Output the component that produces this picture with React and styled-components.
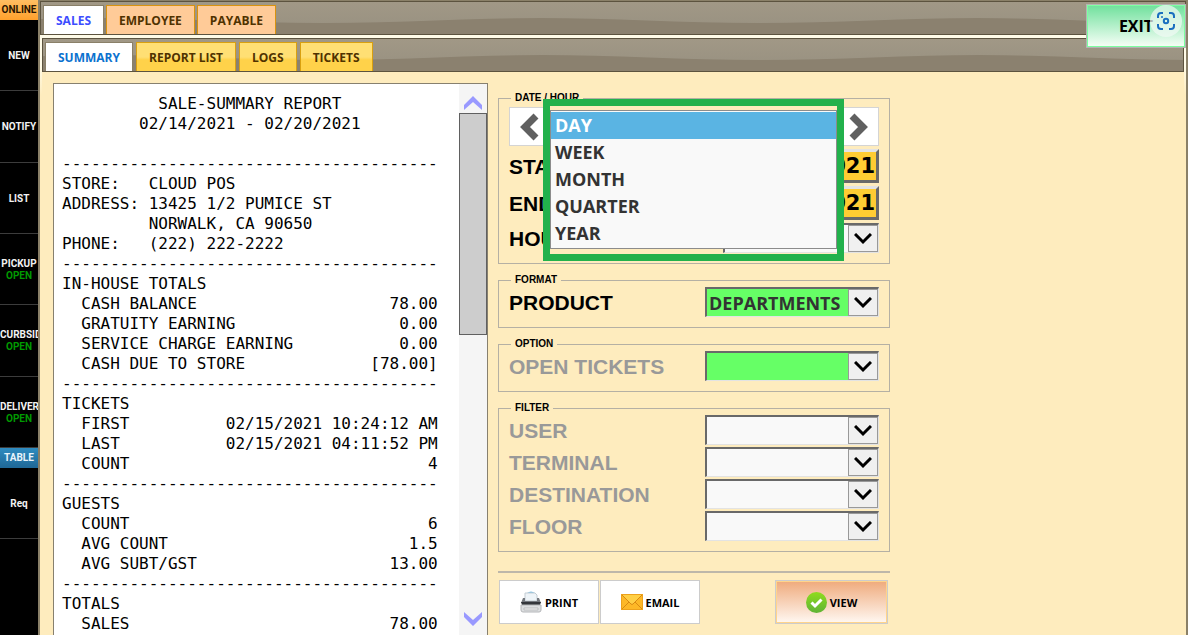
import React, { useState } from 'react'
import styled, { createGlobalStyle } from 'styled-components'

const GlobalStyle = createGlobalStyle`
  * {
    box-sizing: border-box;
  }

  body {
    margin: 0;
    background: #feecbe;
    font-family: 'Open Sans', 'Noto Sans', sans-serif;
  }

  button, select {
    font-family: inherit;
    margin: 0;
  }
`

const Screen = styled.div`
  display: flex;
  height: 100vh;
  overflow: hidden;
`

const Sidebar = styled.nav`
  flex: 0 0 38px;
  min-width: 0;
  width: 38px;
  overflow: hidden;
  background: #000;
  display: flex;
  flex-direction: column;
`

const SideFlag = styled.div`
  flex: none;
  text-align: center;
  white-space: nowrap;
  overflow: hidden;
  font: bold 10px/20px Roboto, sans-serif;
  color: ${({ $blue }) => ($blue ? '#e8f4fc' : '#2a1600')};
  background: ${({ $blue }) =>
    $blue
      ? 'linear-gradient(#2f8cc0, #1f6796)'
      : 'linear-gradient(#ffbe62, #ffa02c)'};
`

const SideGroup = styled.div`
  flex: none;
  height: 428px;
  display: flex;
  flex-direction: column;
`

const SideButton = styled.button`
  flex: ${({ $single }) => ($single ? '0 0 71px' : '1')};
  width: 100%;
  padding: 2px 0 0;
  border: 0;
  border-bottom: 1px solid #3c3c3c;
  background: #000;
  color: #f2f2f2;
  font: bold 10px/12px Roboto, sans-serif;
  text-align: center;
  white-space: nowrap;
  overflow: hidden;
`

const Status = styled.span`
  color: #009a00;
`

const SideName = styled.span`
  display: block;
`

const Main = styled.main`
  flex: 1;
  min-width: 0;
  display: flex;
  flex-direction: column;
  padding-top: 1px;
  border-left: 2px solid #8a8068;
  border-right: 2px solid #8a8068;
  background: #8a8068;
  position: relative;
`

const WAVE = encodeURIComponent(
  "<svg xmlns='http://www.w3.org/2000/svg' width='436' height='34'><path d='M0 21 C75 21 150 16 218 16 S361 21 436 21 V34 H0 Z' fill='#8b816f'/></svg>"
)

const TabBar = styled.div`
  height: 34px;
  flex: none;
  display: flex;
  align-items: flex-end;
  gap: ${({ $tight }) => ($tight ? 2 : 3)}px;
  padding: 0 2px;
  border: 1px solid #5c533f;
  background: url("data:image/svg+xml,${WAVE}") 282px 0 repeat-x,
    linear-gradient(#a19886, #979080);
`

const SubPanel = styled.div`
  flex: 1;
  min-height: 0;
  display: flex;
  flex-direction: column;
  padding: 3px 2px 0;
  background: linear-gradient(#fffbe8 30px, #feecbe 60px);
`

const Tab = styled.button`
  height: 29px;
  padding: 0 12px;
  border: 1px solid ${({ $edge }) => $edge};
  border-bottom: 0;
  background: ${({ $fill }) => $fill};
  color: ${({ $ink }) => $ink};
  font-size: 12px;
  font-weight: bold;
  white-space: nowrap;
`

const ExitButton = styled.button`
  position: absolute;
  top: 4px;
  right: 0;
  width: 100px;
  height: 44px;
  padding: 0;
  border: 1px solid #b5b5b5;
  box-shadow: inset 0 0 0 1px #7dffa0;
  background: linear-gradient(#6fe09c, #f8fff8);
  font-size: 16px;
  font-weight: bold;
`

const LensBadge = styled.span`
  position: absolute;
  top: 0;
  right: 3px;
  width: 32px;
  height: 32px;
  border-radius: 50%;
  display: flex;
  align-items: center;
  justify-content: center;
  background: rgba(240, 250, 244, 0.72);
`

const Body = styled.div`
  flex: 1;
  min-height: 0;
  display: flex;
  gap: 10px;
  padding: 11px 11px 0;
  background: #feecbe;
`

const Report = styled.section`
  flex: 0 1 435px;
  display: flex;
  border: 1px solid #87806f;
  border-bottom: 0;
  background: #fff;
`

const ReportText = styled.pre`
  flex: 1;
  margin: 0;
  padding: 10px 8px;
  overflow: hidden;
  font: 16px/20px 'DejaVu Sans Mono', monospace;
  color: #000;
`

const ScrollTrack = styled.div`
  flex: 0 0 28px;
  display: flex;
  flex-direction: column;
  background: #f5f5f5;
`

const ScrollButton = styled.button`
  height: 29px;
  padding: ${({ $down }) => ($down ? '0 0 4px' : '8px 0 0')};
  border: 0;
  background: none;
  display: flex;
  align-items: center;
  justify-content: center;
`

const ScrollThumb = styled.div`
  height: 222px;
  margin-bottom: auto;
  border: 1px solid #606060;
  background: #cdcdcd;
`

const Form = styled.form`
  flex: 0 1 392px;
  display: flex;
  flex-direction: column;
  gap: 10px;
  padding-top: 9px;
`

const Group = styled.fieldset`
  margin: 0;
  min-width: 0;
  padding: ${({ $roomy }) => ($roomy ? 3 : 1)}px 10px 10px;
  border: 1px solid #b5b0a4;
  display: flex;
  flex-direction: column;
  gap: ${({ $roomy }) => ($roomy ? 3 : 2)}px;
  position: relative;
`

const Legend = styled.legend`
  margin-left: 2px;
  padding: 0 4px;
  font: bold 10px/12px 'Liberation Sans', sans-serif;
  color: #000;
`

const Row = styled.div`
  display: flex;
  align-items: center;
  justify-content: space-between;
`

const FieldLabel = styled.label`
  padding-top: 2px;
  font: bold 21px/28px 'Liberation Sans', sans-serif;
  color: ${({ $dim }) => ($dim ? '#999' : '#000')};
`

const StepButton = styled.button`
  width: 40px;
  height: 39px;
  padding: 0;
  border: 1px solid #d4d4d4;
  background: #fff;
  display: flex;
  align-items: center;
  justify-content: center;
`

const DateButton = styled.button`
  height: 34px;
  padding: 0 1px;
  border: 3px solid;
  border-color: #e3e3e3 #696969 #696969 #e3e3e3;
  background: #ffcc33;
  font: bold 21px/28px 'DejaVu Sans', sans-serif;
`

const SelectBox = styled.div`
  position: relative;
  width: ${({ $narrow }) => ($narrow ? 156 : 174)}px;
  height: 30px;

  select {
    appearance: none;
    width: 100%;
    height: 100%;
    padding: 0 30px 0 2px;
    border: 2px solid;
    border-color: #696969 #e3e3e3 #e3e3e3 #696969;
    border-right-width: 1px;
    border-bottom-width: 1px;
    border-radius: 0;
    background: ${({ $green }) => ($green ? '#66ff66' : '#f9f9f9')};
    color: #333;
    font-size: 18px;
    font-weight: bold;
  }
`

const SelectArrow = styled.span`
  position: absolute;
  top: 2px;
  right: 1px;
  bottom: 1px;
  width: 30px;
  border: 1px solid #999;
  background: #f0f0f0;
  display: flex;
  align-items: center;
  justify-content: center;
  pointer-events: none;
`

const Popup = styled.div`
  position: absolute;
  z-index: 2;
  top: -5px;
  left: 44px;
  right: 45px;
  height: 162px;
  border: 7px solid #22b14c;
  padding: 4px 0 0;
`

const PopupList = styled.ul`
  list-style: none;
  margin: 0;
  padding: 1px 0;
  border: 1px solid #8c8c8c;
  background: #f9f9f9;
`

const PopupItem = styled.li`
  padding-left: 4px;
  font-size: 18px;
  font-weight: bold;
  line-height: 27px;
  color: ${({ $active }) => ($active ? '#fff' : '#333')};
  background: ${({ $active }) => ($active ? '#5ab4e3' : 'transparent')};
`

const Actions = styled.div`
  display: flex;
  gap: 1px;
  margin-top: 9px;
  padding: 7px 2px 0 1px;
  border-top: 2px solid #bdb7aa;
`

const ActionButton = styled.button`
  flex: 0 0 ${({ $primary }) => ($primary ? 113 : 100)}px;
  height: 44px;
  margin-left: ${({ $primary }) => ($primary ? 'auto' : 0)};
  padding: 0;
  border: 1px solid #ccc;
  box-shadow: ${({ $primary }) => ($primary ? 'inset 0 0 0 1px #ffd48a' : 'none')};
  background: ${({ $primary }) =>
    $primary ? 'linear-gradient(#efaa7c, #fff8f2)' : '#fff'};
  display: flex;
  align-items: center;
  justify-content: center;
  gap: 3px;
  font-size: 11px;
  font-weight: bold;
  color: #000;
`

const WIDTH = 39
const RULE = '-'.repeat(WIDTH)

const center = (text) => ' '.repeat((WIDTH - text.length) / 2) + text
const line = (label, value) =>
  '  ' + label + value.padStart(WIDTH - 2 - label.length)

const REPORT = [
  center('SALE-SUMMARY REPORT'),
  center('02/14/2021 - 02/20/2021'),
  '',
  RULE,
  'STORE:   CLOUD POS',
  'ADDRESS: 13425 1/2 PUMICE ST',
  '         NORWALK, CA 90650',
  'PHONE:   (222) 222-2222',
  RULE,
  'IN-HOUSE TOTALS',
  line('CASH BALANCE', '78.00'),
  line('GRATUITY EARNING', '0.00'),
  line('SERVICE CHARGE EARNING', '0.00'),
  line('CASH DUE TO STORE', '[78.00]'),
  RULE,
  'TICKETS',
  line('FIRST', '02/15/2021 10:24:12 AM'),
  line('LAST', '02/15/2021 04:11:52 PM'),
  line('COUNT', '4'),
  RULE,
  'GUESTS',
  line('COUNT', '6'),
  line('AVG COUNT', '1.5'),
  line('AVG SUBT/GST', '13.00'),
  RULE,
  'TOTALS',
  line('SALES', '78.00'),
].join('\n')

const SIDE_ITEMS = [
  { name: 'NEW' },
  { name: 'NOTIFY' },
  { name: 'LIST' },
  { name: 'PICKUP', status: 'OPEN' },
  { name: 'CURBSIDE', status: 'OPEN' },
  { name: 'DELIVERY', status: 'OPEN' },
]

const PERIODS = ['DAY', 'WEEK', 'MONTH', 'QUARTER', 'YEAR']

const FILTERS = ['USER', 'TERMINAL', 'DESTINATION', 'FLOOR']

const Chevron = ({ dir }) => (
  <svg width='24' height='30' viewBox='0 0 24 30'>
    <path
      d={dir === 'left' ? 'M19 4 L8 15 L19 26' : 'M5 4 L16 15 L5 26'}
      fill='none'
      stroke='#606060'
      strokeWidth='7'
    />
  </svg>
)

const ScrollArrow = ({ down }) => (
  <svg width='18' height='14' viewBox='0 0 18 14'>
    <path
      d={down ? 'M0 0 L9 8 L18 0 V5 L9 14 L0 5 Z' : 'M0 14 L9 6 L18 14 V9 L9 0 L0 9 Z'}
      fill='#9999ff'
    />
  </svg>
)

const PrinterIcon = () => (
  <svg width='22' height='22' viewBox='0 0 22 22'>
    <path d='M7 2 Q11 -1 15 2 V4 H7 Z' fill='#7fbfe4' />
    <path d='M5 2 H15 L17 4 V10 H5 Z' fill='#eef4f8' stroke='#c3ccd3' />
    <path d='M3 7 H5 V10 H17 V7 H19 L21 12 H1 Z' fill='#74787e' />
    <path d='M1 11 H21 L20 14 H2 Z' fill='#33363b' />
    <path d='M1 14 H21 V19 Q21 21 19 21 H3 Q1 21 1 19 Z' fill='#dddfe1' stroke='#b4b6b9' />
    <path d='M4 17 H18 V19 H4 Z' fill='#f5f5f5' stroke='#bbbdbf' />
  </svg>
)

const MailIcon = () => (
  <svg width='22' height='16' viewBox='0 0 22 16'>
    <rect x='0.5' y='0.5' width='21' height='15' fill='#fdb827' stroke='#eda21c' />
    <path d='M1 1 H21 L12 10 Q11 11 10 10 Z' fill='#ffcf45' />
    <path d='M1 1 L10 10 Q11 11 12 10 L21 1 M1 15 L8 8 M21 15 L14 8' fill='none' stroke='#d98a12' />
  </svg>
)

const CheckIcon = () => (
  <svg width='21' height='21' viewBox='0 0 21 21'>
    <defs>
      <linearGradient id='check' x1='0' y1='0' x2='0' y2='1'>
        <stop offset='0' stopColor='#8fdc1e' />
        <stop offset='1' stopColor='#5fb336' />
      </linearGradient>
    </defs>
    <circle cx='10.5' cy='10.5' r='10.5' fill='url(#check)' />
    <path d='M5.5 10.5 L9 14 L15.5 7.5' fill='none' stroke='#fff' strokeWidth='3' />
  </svg>
)

const LensIcon = () => (
  <svg width='18' height='18' viewBox='0 0 18 18' fill='none' stroke='#1a6fc0' strokeWidth='2'>
    <path d='M1 6 V4 Q1 1 4 1 H6 M12 1 H14 Q17 1 17 4 V6 M17 12 V14 Q17 17 14 17 H12 M6 17 H4 Q1 17 1 14 V12' />
    <circle cx='9' cy='9' r='2.2' />
    <circle cx='5' cy='5' r='1' fill='#1a6fc0' stroke='none' />
  </svg>
)

const Select = ({ id, value, green, narrow }) => (
  <SelectBox $green={green} $narrow={narrow}>
    <select id={id} defaultValue={value}>
      <option value={value}>{value}</option>
    </select>
    <SelectArrow>
      <svg width='18' height='12' viewBox='0 0 18 12'>
        <path d='M1 1 L9 9 L17 1' fill='none' stroke='#000' strokeWidth='3' />
      </svg>
    </SelectArrow>
  </SelectBox>
)

const PeriodPopup = () => {
  const [period, setPeriod] = useState('DAY')
  return (
    <Popup>
      <PopupList role='listbox' aria-label='Period'>
        {PERIODS.map((name) => (
          <PopupItem
            key={name}
            role='option'
            aria-selected={name === period}
            $active={name === period}
            onClick={() => setPeriod(name)}
          >
            {name}
          </PopupItem>
        ))}
      </PopupList>
    </Popup>
  )
}

const App = () => {
  return (
    <Screen>
      <GlobalStyle />
      <Sidebar>
        <SideFlag>ONLINE</SideFlag>
        <SideGroup>
          {SIDE_ITEMS.map(({ name, status }) => (
            <SideButton key={name}>
              <SideName>{name}</SideName>
              {status && <Status>{status}</Status>}
            </SideButton>
          ))}
        </SideGroup>
        <SideFlag $blue>TABLE</SideFlag>
        <SideButton $single>Req</SideButton>
      </Sidebar>

      <Main>
        <TabBar $tight>
          <Tab $fill='#fff' $edge='#8a8068' $ink='#3d4dff'>SALES</Tab>
          <Tab $fill='#ffcb98' $edge='#d9930f' $ink='#4f3200'>EMPLOYEE</Tab>
          <Tab $fill='#ffcb98' $edge='#d9930f' $ink='#4f3200'>PAYABLE</Tab>
        </TabBar>
        <ExitButton>
          EXIT
          <LensBadge><LensIcon /></LensBadge>
        </ExitButton>

        <SubPanel>
          <TabBar>
            <Tab $fill='#fff' $edge='#8a8068' $ink='#0b72cf'>SUMMARY</Tab>
            <Tab $fill='linear-gradient(#ffdf74 50%, #ffd24a 60%)' $edge='#d9a010' $ink='#4f3200'>REPORT LIST</Tab>
            <Tab $fill='linear-gradient(#ffdf74 50%, #ffd24a 60%)' $edge='#d9a010' $ink='#4f3200'>LOGS</Tab>
            <Tab $fill='linear-gradient(#ffdf74 50%, #ffd24a 60%)' $edge='#d9a010' $ink='#4f3200'>TICKETS</Tab>
          </TabBar>

          <Body>
            <Report>
              <ReportText>{REPORT}</ReportText>
              <ScrollTrack>
                <ScrollButton aria-label='Scroll up'><ScrollArrow /></ScrollButton>
                <ScrollThumb />
                <ScrollButton $down aria-label='Scroll down'><ScrollArrow down /></ScrollButton>
              </ScrollTrack>
            </Report>

            <Form onSubmit={(e) => e.preventDefault()}>
              <Group $roomy>
                <Legend>DATE / HOUR</Legend>
                <Row>
                  <StepButton type='button' aria-label='Previous'><Chevron dir='left' /></StepButton>
                  <StepButton type='button' aria-label='Next'><Chevron dir='right' /></StepButton>
                </Row>
                <Row>
                  <FieldLabel htmlFor='start'>START</FieldLabel>
                  <DateButton id='start' type='button'>02/14/2021</DateButton>
                </Row>
                <Row>
                  <FieldLabel htmlFor='end'>END</FieldLabel>
                  <DateButton id='end' type='button'>02/20/2021</DateButton>
                </Row>
                <Row>
                  <FieldLabel htmlFor='hour'>HOUR</FieldLabel>
                  <Select id='hour' value='' narrow />
                </Row>
                <PeriodPopup />
              </Group>

              <Group>
                <Legend>FORMAT</Legend>
                <Row>
                  <FieldLabel htmlFor='product'>PRODUCT</FieldLabel>
                  <Select id='product' value='DEPARTMENTS' green />
                </Row>
              </Group>

              <Group>
                <Legend>OPTION</Legend>
                <Row>
                  <FieldLabel htmlFor='open' $dim>OPEN TICKETS</FieldLabel>
                  <Select id='open' value='' green />
                </Row>
              </Group>

              <Group>
                <Legend>FILTER</Legend>
                {FILTERS.map((name) => (
                  <Row key={name}>
                    <FieldLabel htmlFor={name} $dim>{name}</FieldLabel>
                    <Select id={name} value='' />
                  </Row>
                ))}
              </Group>

              <Actions>
                <ActionButton type='button'><PrinterIcon /> PRINT</ActionButton>
                <ActionButton type='button'><MailIcon /> EMAIL</ActionButton>
                <ActionButton type='submit' $primary><CheckIcon /> VIEW</ActionButton>
              </Actions>
            </Form>
          </Body>
        </SubPanel>
      </Main>
    </Screen>
  )
}

export default App
